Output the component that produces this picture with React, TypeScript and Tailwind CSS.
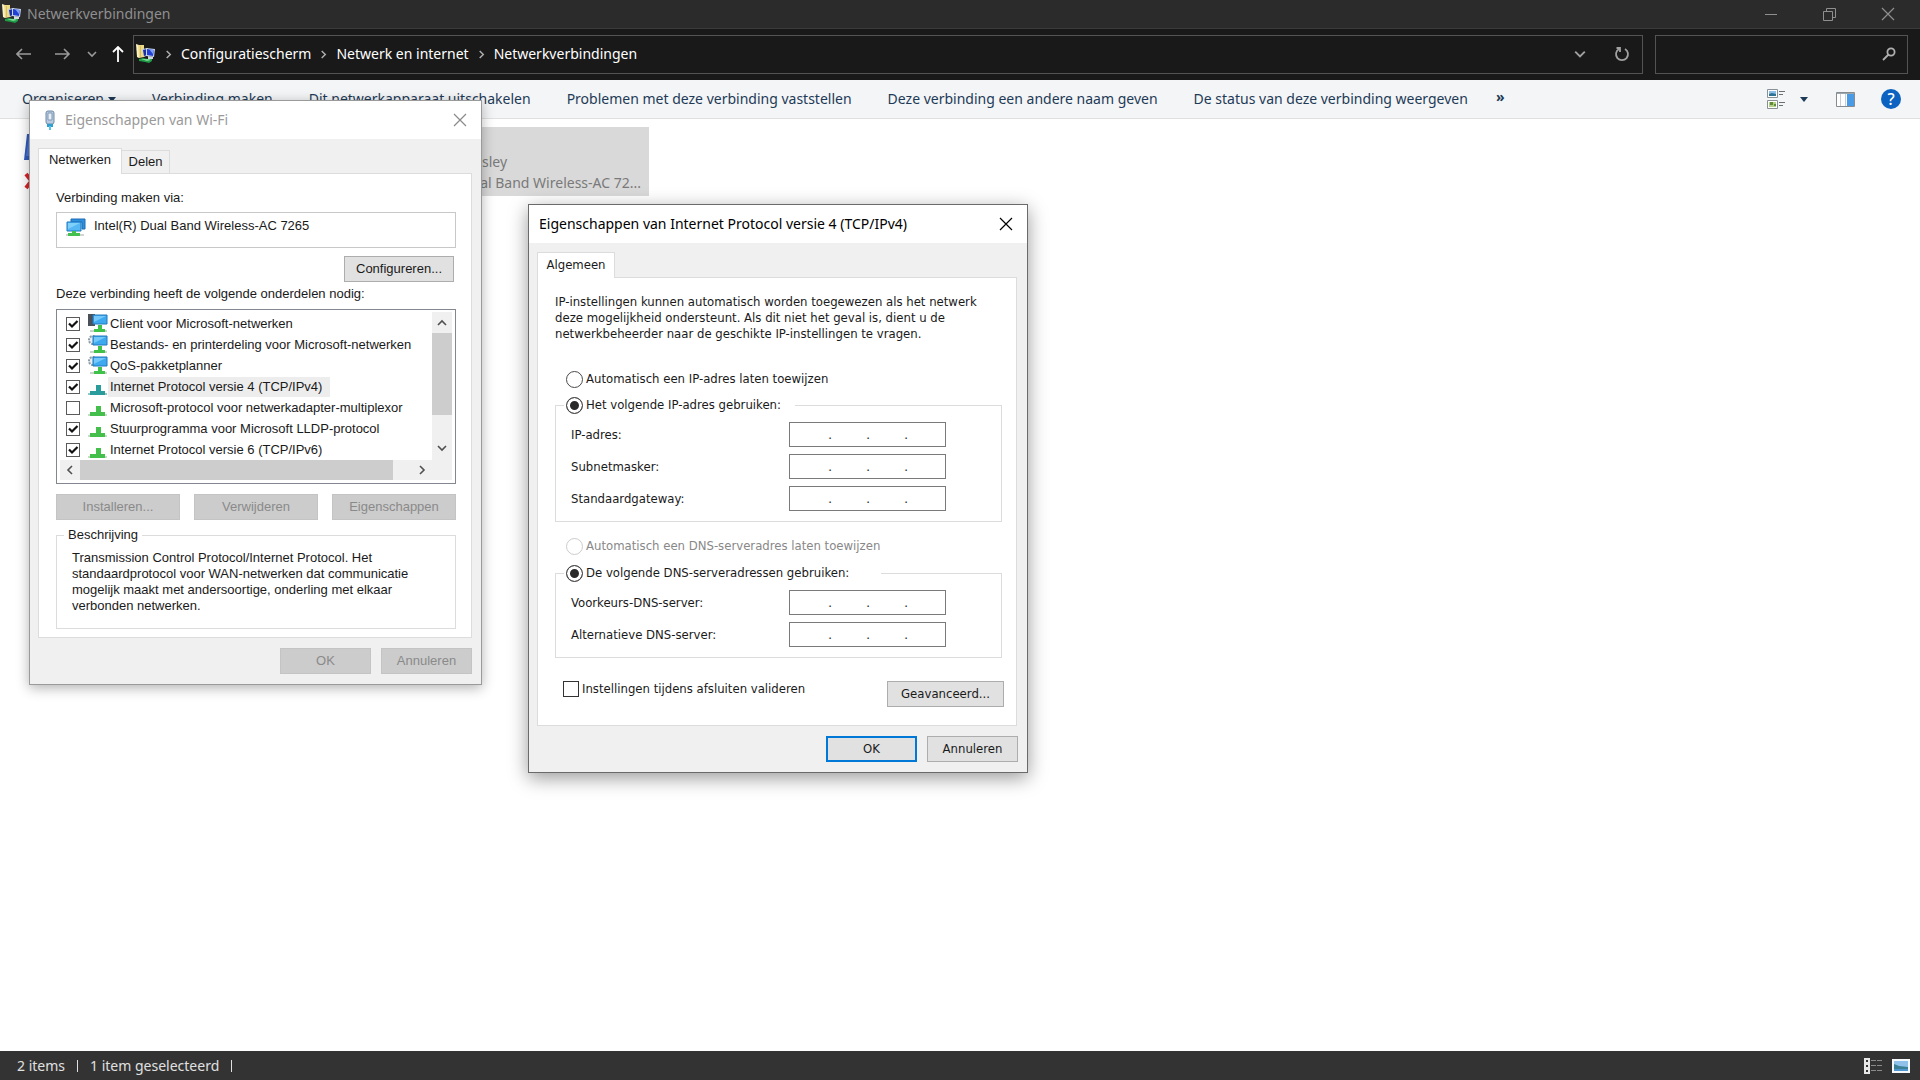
import { useId } from 'react';
import type { ReactNode } from 'react';
import clsx from 'clsx';

const commands = [
  'Verbinding maken',
  'Dit netwerkapparaat uitschakelen',
  'Problemen met deze verbinding vaststellen',
  'Deze verbinding een andere naam geven',
  'De status van deze verbinding weergeven',
];

const breadcrumbs = ['Configuratiescherm', 'Netwerk en internet', 'Netwerkverbindingen'];

const components = [
  { name: 'Client voor Microsoft-netwerken', icon: 'client', checked: true },
  { name: 'Bestands- en printerdeling voor Microsoft-netwerken', icon: 'service', checked: true },
  { name: 'QoS-pakketplanner', icon: 'service', checked: true },
  { name: 'Internet Protocol versie 4 (TCP/IPv4)', icon: 'protocol', checked: true, selected: true },
  { name: 'Microsoft-protocol voor netwerkadapter-multiplexor', icon: 'protocol', checked: false },
  { name: 'Stuurprogramma voor Microsoft LLDP-protocol', icon: 'protocol', checked: true },
  { name: 'Internet Protocol versie 6 (TCP/IPv6)', icon: 'protocol', checked: true },
];

function NetworkFolderIcon() {
  return (
    <svg width="20" height="20" viewBox="0 0 20 20" className="shrink-0">
      <path d="M0 0l3 1v13l-2-1z" fill="#fbf2c4" />
      <path d="M2 1l6 0v12l-5 1z" fill="#ecd98a" />
      <path d="M4 2h1v11H4z" fill="#d9bf5e" />
      <path d="M6 5l6-1v7l-4 2z" fill="#c3cfe6" />
      <path d="M7 6l4-1v6l-3 1z" fill="#1d2f9e" />
      <path d="M10 4l9 1-1 8-8-1z" fill="#c9d6ee" />
      <path d="M11 5l7 1-1 6-6-1z" fill="#2340d4" />
      <path d="M13 5l5 1-1 4z" fill="#7fa0f3" />
      <path d="M12 12l5 1v2h-5z" fill="#cfd6df" />
      <path d="M3 15l4-1 5 1 4 0v2l-3 2-4-1-6-1z" fill="#1f9a45" />
      <path d="M5 15h8l2 1-4 1z" fill="#7bd795" />
    </svg>
  );
}

function MonitorsIcon() {
  return (
    <svg width="20" height="19" viewBox="0 0 20 19" className="shrink-0">
      <path d="M5 1h14v10h-3V4H5z" fill="#2f8fdc" stroke="#1d6cb5" />
      <path d="M1 4h14v9H1z" fill="#55b8f5" stroke="#1d78c2" />
      <path d="M2 5h12L2 11z" fill="#7fd0fb" />
      <path d="M6 13h4v2h4v3H2v-3h4z" fill="#45c04f" />
      <path d="M0 16h2v2H0zM14 16h4v2h-4z" fill="#d3d3d3" />
    </svg>
  );
}

function ComponentIcon({ kind, selected }: { kind: string; selected?: boolean }) {
  if (kind === 'protocol') {
    return (
      <svg width="20" height="21" viewBox="0 0 20 21" className="shrink-0">
        <path d="M8 9h5v6h4v4H2v-4h6z" fill={selected ? '#2b9c9c' : '#45bf4b'} />
        <path d="M0 17h2v2H0zM17 17h2v2h-2z" fill={selected ? '#8fc6c6' : '#c3ddc4'} />
      </svg>
    );
  }
  return (
    <svg width="20" height="21" viewBox="0 0 20 21" className="shrink-0">
      {kind === 'client' ? (
        <path d="M0 1h7v12H0z" fill="#4b5158" />
      ) : (
        <circle cx="5" cy="6" r="4" fill="#e8eef3" stroke="#8c9aa5" strokeWidth="2" strokeDasharray="2 1" />
      )}
      <path d="M5 2h14v9H5z" fill="#3fa9f0" stroke="#2079bd" />
      <path d="M6 3h12L6 9z" fill="#74c8fa" />
      <path d="M10 12h4v4h3v3H6v-3h4z" fill="#3fc24a" />
      <path d="M2 17h4v2H2zM17 17h2v2h-2z" fill="#c6d3c8" />
    </svg>
  );
}

function AdapterIcon() {
  return (
    <svg width="10" height="20" viewBox="0 0 10 20" className="shrink-0">
      <rect x="1" y="1" width="8" height="13" rx="2" fill="#b9cbe0" stroke="#6f8aa8" />
      <path d="M3 3h4v7H3z" fill="#e6eef7" stroke="#8199b4" />
      <path d="M2 14h6v3H2z" fill="#2c9fd2" />
      <path d="M4 16h2v4H4z" fill="#56c3e8" />
    </svg>
  );
}

function Chevron({ dir, size = 10, className }: { dir: string; size?: number; className?: string }) {
  const paths: Record<string, string> = {
    up: 'M1 7l4-4 4 4',
    down: 'M1 3l4 4 4-4',
    left: 'M7 1L3 5l4 4',
    right: 'M3 1l4 4-4 4',
  };
  return (
    <svg width={size} height={size} viewBox="0 0 10 10" fill="none" stroke="currentColor" strokeWidth="1.6" className={clsx('shrink-0', className)}>
      <path d={paths[dir]} />
    </svg>
  );
}

function CloseGlyph() {
  return (
    <svg width="14" height="14" viewBox="0 0 14 14" fill="none" stroke="currentColor" strokeWidth="1.2">
      <path d="M1 1l12 12M13 1L1 13" />
    </svg>
  );
}

function PushButton({ children, className, disabled }: { children: ReactNode; className?: string; disabled?: boolean }) {
  return (
    <button
      type="button"
      disabled={disabled}
      className={clsx(
        'h-[26px] shrink-0 border text-center leading-4',
        disabled ? 'border-[#c4c4c4] bg-[#cccccc] text-[#8a8a8a]' : 'bg-[#e1e1e1] text-[#1a1a1a]',
        className,
      )}
    >
      {children}
    </button>
  );
}

function RadioOption({ name, label, checked, disabled }: { name: string; label: string; checked?: boolean; disabled?: boolean }) {
  return (
    <label className={clsx('flex h-[18px] items-center gap-[3px]', disabled && 'text-[#888888]')}>
      <input
        type="radio"
        name={name}
        defaultChecked={checked}
        disabled={disabled}
        className="size-[17px] shrink-0 appearance-none rounded-full border border-[#4a4a4a] bg-white checked:bg-[#2a2a2a] checked:shadow-[inset_0_0_0_3px_white] disabled:border-[#cccccc]"
      />
      {label}
    </label>
  );
}

function AddressField({ label }: { label: string }) {
  const id = useId();
  return (
    <div className="flex items-center">
      <label htmlFor={id} className="w-[218px]">
        {label}
      </label>
      <div className="flex h-[25px] w-[157px] items-center border border-[#7a7a7a] bg-white pl-1">
        {[0, 1, 2, 3].map((part) => (
          <div key={part} className="flex items-center">
            {part > 0 && <span className="w-1 text-center">.</span>}
            <input
              id={part === 0 ? id : undefined}
              aria-label={part === 0 ? undefined : `${label} ${part + 1}`}
              type="text"
              maxLength={3}
              className="h-5 w-[34px] bg-transparent text-center outline-none"
            />
          </div>
        ))}
      </div>
    </div>
  );
}

function TitleBar() {
  return (
    <div className="flex h-[29px] items-center border-b border-[#3a3a3a] bg-[#2b2b2b] pr-[2px] text-[#8f8f8f]">
      <div className="flex flex-1 items-center gap-[5px] pl-[2px]">
        <NetworkFolderIcon />
        <span>Netwerkverbindingen</span>
      </div>
      <button type="button" aria-label="Minimaliseren" className="flex w-[58px] justify-center">
        <svg width="12" height="12" viewBox="0 0 12 12" stroke="currentColor">
          <path d="M0 6.5h12" />
        </svg>
      </button>
      <button type="button" aria-label="Verkleinen" className="flex w-[58px] justify-center">
        <svg width="13" height="13" viewBox="0 0 13 13" fill="none" stroke="currentColor">
          <path d="M.5 3.5h9v9h-9zM3.5 3V.5h9v9H10" />
        </svg>
      </button>
      <button type="button" aria-label="Sluiten" className="flex w-[60px] justify-center">
        <CloseGlyph />
      </button>
    </div>
  );
}

function NavigationBar() {
  return (
    <div className="flex h-[51px] items-center bg-[#191919] pr-3 pb-px text-white">
      <button type="button" aria-label="Terug" className="ml-4 text-[#9a9a9a]">
        <svg width="16" height="14" viewBox="0 0 16 14" fill="none" stroke="currentColor" strokeWidth="1.6">
          <path d="M6 2L1 7l5 5M1 7h14" />
        </svg>
      </button>
      <button type="button" aria-label="Vooruit" className="ml-[23px] text-[#9a9a9a]">
        <svg width="16" height="14" viewBox="0 0 16 14" fill="none" stroke="currentColor" strokeWidth="1.6">
          <path d="M9 2l5 5-5 5M14 7H0" />
        </svg>
      </button>
      <button type="button" aria-label="Recente locaties" className="ml-[16px] text-[#9a9a9a]">
        <Chevron dir="down" />
      </button>
      <button type="button" aria-label="Omhoog" className="ml-[15px]">
        <svg width="12" height="16" viewBox="0 0 12 16" fill="none" stroke="currentColor" strokeWidth="1.8">
          <path d="M1 6l5-5 5 5M6 1v15" />
        </svg>
      </button>
      <nav className="ml-[9px] flex h-[39px] flex-1 items-center border border-[#535353] pl-[2px]">
        <NetworkFolderIcon />
        {breadcrumbs.map((crumb) => (
          <div key={crumb} className="flex items-center">
            <Chevron dir="right" size={9} className="mx-2 text-[#b0b0b0]" />
            <a href="#" className="whitespace-nowrap">
              {crumb}
            </a>
          </div>
        ))}
        <button type="button" aria-label="Vorige locaties" className="mr-[28px] ml-auto text-[#a0a0a0]">
          <Chevron dir="down" size={12} />
        </button>
        <button type="button" aria-label="Vernieuwen" className="mr-[12px] text-[#a0a0a0]">
          <svg width="16" height="16" viewBox="0 0 16 16" fill="none" stroke="currentColor" strokeWidth="1.8">
            <path d="M5 3a6 6 0 1 0 6 0M2.500 2H6v4" />
          </svg>
        </button>
      </nav>
      <div className="ml-3 flex h-[39px] w-[253px] items-center border border-[#535353] pr-[11px] text-[#b0b0b0]">
        <input type="search" aria-label="Zoeken" className="h-full min-w-0 flex-1 bg-transparent px-2 outline-none" />
        <svg width="14" height="14" viewBox="0 0 14 14" fill="none" stroke="currentColor" strokeWidth="1.8">
          <circle cx="9" cy="5" r="3.6" />
          <path d="M6.5 7.5L1 13" />
        </svg>
      </div>
    </div>
  );
}

function CommandBar() {
  return (
    <div className="flex h-[39px] items-center border-b border-[#e0e0e0] bg-[#f3f5f7] text-[#1e3a56]">
      <div className="flex flex-1 items-center gap-9 pl-[22px] whitespace-nowrap">
        <button type="button" className="flex items-center gap-1">
          Organiseren
          <svg width="8" height="5" viewBox="0 0 8 5" fill="currentColor">
            <path d="M0 0h8L4 5z" />
          </svg>
        </button>
        {commands.map((command) => (
          <button key={command} type="button">
            {command}
          </button>
        ))}
        <button type="button" aria-label="Meer opdrachten" className="-ml-2 pb-1 font-bold">
          »
        </button>
      </div>
      <button type="button" aria-label="Weergave wijzigen" className="flex items-center gap-[14px]">
        <svg width="19" height="20" viewBox="0 0 19 20">
          <path d="M.5.5h10v8H.5zM.5 11.500h10v8H.5z" fill="#fff" stroke="#8a8f94" />
          <path d="M2 2h7v5H2z" fill="#8dbfe8" />
          <path d="M2 5l3-1 4 1v2H2z" fill="#2f7394" />
          <path d="M2 13h7v5H2z" fill="#b4cf87" />
          <path d="M3 13h3v3H3zM7 15h2v2H7z" fill="#5f8a3c" />
          <path d="M12 2.500h6M12 5.500h4M12 13.500h6M12 16.500h4" stroke="#6b7075" />
        </svg>
        <svg width="8" height="5" viewBox="0 0 8 5" fill="currentColor">
          <path d="M0 0h8L4 5z" />
        </svg>
      </button>
      <button type="button" aria-label="Voorbeeldvenster" className="ml-7">
        <svg width="19" height="15" viewBox="0 0 19 15">
          <path d="M.5.5h18v14H.5z" fill="#fff" stroke="#868c92" />
          <path d="M1 1h17v1H1z" fill="#9fa7ae" />
          <path d="M11 2h7v12h-7z" fill="#4a9be6" />
          <path d="M4.500 2v12M9.500 2v12" stroke="#c9cdd1" />
        </svg>
      </button>
      <button
        type="button"
        aria-label="Help"
        className="mr-[19px] ml-[26px] flex size-5 items-center justify-center rounded-full bg-[#0b62c0] text-base font-medium text-white"
      >
        ?
      </button>
    </div>
  );
}

function ConnectionList() {
  return (
    <main className="flex flex-1 items-start pt-2 pl-[24px] text-[#7a7a7a]">
      <div className="flex w-[276px] flex-col gap-3 pt-[7px]">
        <svg width="26" height="26" viewBox="0 0 26 26">
          <path d="M3 0h23v26H0z" fill="#2f5bbd" />
          <path d="M5 2h19v20H2z" fill="#4a76d2" />
        </svg>
        <svg width="15" height="18" viewBox="0 0 15 18" fill="none" stroke="#d8232a" strokeWidth="4">
          <path d="M2 2l11 14M13 2L2 16" />
        </svg>
      </div>
      <div className="w-[349px] bg-[#d9d9d9] px-2 pt-[24px] pb-[3px] leading-[21px]">
        <p className="pl-[174px]">sley</p>
        <p className="text-right whitespace-nowrap">Intel(R) Dual Band Wireless-AC 72...</p>
      </div>
    </main>
  );
}

function StatusBar() {
  return (
    <footer className="flex h-[29px] items-center bg-[#333333] text-[#e0e0e0]">
      <span className="ml-[17px]">2 items</span>
      <span className="ml-3 h-3 w-px bg-[#e0e0e0]" />
      <span className="ml-3">1 item geselecteerd</span>
      <span className="ml-3 h-3 w-px bg-[#e0e0e0]" />
      <button type="button" aria-label="Details" className="ml-auto">
        <svg width="18" height="16" viewBox="0 0 18 16">
          <path d="M0 0h6v16H0z" fill="#e8e8e8" />
          <path d="M2 2h2v2H2zM2 7h2v2H2zM2 12h2v2H2z" fill="#333" />
          <path d="M7 2.500h11M7 7.500h11M7 12.500h11" stroke="#8a8a8a" strokeDasharray="5 1" />
        </svg>
      </button>
      <button type="button" aria-label="Grote pictogrammen" className="mr-[10px] ml-[10px]">
        <svg width="18" height="14" viewBox="0 0 18 14">
          <path d="M0 0h18v14H0z" fill="#f4f8fb" />
          <path d="M2 2h14v10H2z" fill="#8fc1ea" />
          <path d="M2 5l5 2 9 1v4H2z" fill="#3a7f93" />
          <path d="M2 10h14v2H2z" fill="#4f95cf" />
        </svg>
      </button>
    </footer>
  );
}

function WifiDialog() {
  return (
    <section
      aria-label="Eigenschappen van Wi-Fi"
      className="absolute top-[100px] left-[29px] w-[453px] border border-[#9a9a9a] bg-[#f0f0f0] font-['Liberation_Sans',Arial,sans-serif] text-[13px] leading-4 text-[#1a1a1a] shadow-[0_3px_12px_rgba(0,0,0,0.3)]"
    >
      <header className="flex h-[38px] items-center bg-white pr-[14px] pl-[15px] text-[#9a9a9a]">
        <AdapterIcon />
        <h2 className="ml-[10px] flex-1 font-['Noto_Sans','Segoe_UI',sans-serif] text-sm">Eigenschappen van Wi-Fi</h2>
        <button type="button" aria-label="Sluiten" className="text-[#8a8a8a]">
          <CloseGlyph />
        </button>
      </header>
      <div className="pt-[9px] pr-[9px] pb-[10px] pl-2">
        <div role="tablist" className="flex h-[25px] items-end">
          <button type="button" role="tab" aria-selected className="z-10 -mb-px h-[26px] w-[84px] border border-b-0 border-[#dcdcdc] bg-white pb-1">
            Netwerken
          </button>
          <button type="button" role="tab" aria-selected={false} className="h-[23px] w-12 border border-b-0 border-l-0 border-[#dcdcdc]">
            Delen
          </button>
        </div>
        <div className="flex flex-col border border-[#dcdcdc] bg-white px-[17px] pt-4 pr-[15px] pb-2">
          <p>Verbinding maken via:</p>
          <div className="mt-[6px] flex h-9 items-start gap-2 border border-[#c8c8c8] px-[9px] pt-[5px]">
            <MonitorsIcon />
            <span>Intel(R) Dual Band Wireless-AC 7265</span>
          </div>
          <PushButton className="mt-2 mr-[2px] w-[110px] self-end border-[#adadad]">Configureren...</PushButton>
          <p className="mt-1">Deze verbinding heeft de volgende onderdelen nodig:</p>
          <div className="mt-[7px] border border-[#828790] pb-[3px]">
            <div className="flex pr-[3px]">
              <ul className="min-w-0 flex-1 pt-[3px]">
                {components.map((item) => (
                  <li key={item.name}>
                    <label className="flex h-[21px] items-center pl-[9px] whitespace-nowrap">
                      <span className="relative mr-2 size-[14px] shrink-0">
                        <input
                          type="checkbox"
                          defaultChecked={item.checked}
                          className="peer block size-full appearance-none border border-[#5a5a5a] bg-white"
                        />
                        <svg viewBox="0 0 14 14" fill="none" stroke="#111" strokeWidth="2.200" className="pointer-events-none absolute inset-0 hidden peer-checked:block">
                          <path d="M3 6.500l3 3L11.500 4" />
                        </svg>
                      </span>
                      <ComponentIcon kind={item.icon} selected={item.selected} />
                      <span className={clsx('px-[2px] leading-5', item.selected && 'bg-[#ededed] pr-2')}>{item.name}</span>
                    </label>
                  </li>
                ))}
              </ul>
              <div className="mt-[2px] flex w-5 shrink-0 flex-col items-center bg-[#f0f0f0] text-[#505050]">
                <div className="flex h-[21px] items-center">
                  <Chevron dir="up" />
                </div>
                <div className="h-[82px] w-full bg-[#cdcdcd]" />
                <div className="mt-auto flex h-6 items-center">
                  <Chevron dir="down" />
                </div>
              </div>
            </div>
            <div className="mx-[3px] flex h-5 items-center bg-[#f0f0f0] text-[#505050]">
              <div className="flex w-5 justify-center">
                <Chevron dir="left" />
              </div>
              <div className="h-full w-[313px] bg-[#cdcdcd]" />
              <Chevron dir="right" className="ml-6" />
            </div>
          </div>
          <div className="mt-[10px] flex justify-between">
            <PushButton disabled className="w-[124px]">Installeren...</PushButton>
            <PushButton disabled className="w-[124px]">Verwijderen</PushButton>
            <PushButton disabled className="w-[124px]">Eigenschappen</PushButton>
          </div>
          <fieldset className="mt-[7px] border border-[#dcdcdc] px-[15px] pt-[7px] pb-[14px]">
            <legend className="-ml-2 px-1">Beschrijving</legend>
            <p>
              Transmission Control Protocol/Internet Protocol. Het standaardprotocol voor WAN-netwerken dat communicatie
              mogelijk maakt met andersoortige, onderling met elkaar verbonden netwerken.
            </p>
          </fieldset>
        </div>
        <div className="mt-[10px] flex justify-end gap-[10px]">
          <PushButton disabled className="w-[91px]">OK</PushButton>
          <PushButton disabled className="w-[91px]">Annuleren</PushButton>
        </div>
      </div>
    </section>
  );
}

function Ipv4Dialog() {
  return (
    <section
      aria-label="Eigenschappen van Internet Protocol versie 4 (TCP/IPv4)"
      className="absolute top-[204px] left-[528px] w-[500px] border border-[#6a6a6a] bg-[#f0f0f0] font-['DejaVu_Sans_Condensed','DejaVu_Sans',Tahoma,sans-serif] text-[13px] leading-4 text-[#1a1a1a] shadow-[0_5px_18px_rgba(0,0,0,0.4)]"
    >
      <header className="flex h-[38px] items-center bg-white pr-[14px] pl-[10px] text-black">
        <h2 className="flex-1 font-['Noto_Sans','Segoe_UI',sans-serif] text-sm whitespace-nowrap">
          Eigenschappen van Internet Protocol versie 4 (TCP/IPv4)
        </h2>
        <button type="button" aria-label="Sluiten">
          <CloseGlyph />
        </button>
      </header>
      <div className="pt-[9px] pr-[9px] pb-[10px] pl-2">
        <div role="tablist" className="flex h-[25px]">
          <button type="button" role="tab" aria-selected className="z-10 -mb-px w-[78px] border border-b-0 border-[#dcdcdc] bg-white pb-[2px]">
            Algemeen
          </button>
        </div>
        <div className="mr-px border border-[#dcdcdc] bg-white pt-4 pr-3 pb-[18px] pl-[17px]">
          <p>
            IP-instellingen kunnen automatisch worden toegewezen als het netwerk
            <br />
            deze mogelijkheid ondersteunt. Als dit niet het geval is, dient u de
            <br />
            netwerkbeheerder naar de geschikte IP-instellingen te vragen.
          </p>
          <div className="mt-7 pl-[11px]">
            <RadioOption name="ip" label="Automatisch een IP-adres laten toewijzen" />
          </div>
          <fieldset className="mt-2 mr-[2px] flex flex-col gap-[7px] border border-[#dcdcdc] px-[15px] pt-2 pb-[10px]">
            <legend className="-ml-[7px] pr-[14px] pl-[2px]">
              <RadioOption name="ip" label="Het volgende IP-adres gebruiken:" checked />
            </legend>
            <AddressField label="IP-adres:" />
            <AddressField label="Subnetmasker:" />
            <AddressField label="Standaardgateway:" />
          </fieldset>
          <div className="mt-[15px] pl-[11px]">
            <RadioOption name="dns" label="Automatisch een DNS-serveradres laten toewijzen" disabled />
          </div>
          <fieldset className="mt-[9px] mr-[2px] flex flex-col gap-[7px] border border-[#dcdcdc] px-[15px] pt-2 pb-[10px]">
            <legend className="-ml-[7px] pr-8 pl-[2px]">
              <RadioOption name="dns" label="De volgende DNS-serveradressen gebruiken:" checked />
            </legend>
            <AddressField label="Voorkeurs-DNS-server:" />
            <AddressField label="Alternatieve DNS-server:" />
          </fieldset>
          <div className="mt-[23px] flex items-start justify-between pl-2">
            <label className="flex items-center gap-[3px]">
              <input type="checkbox" className="size-4 appearance-none border border-[#333333] bg-white checked:bg-[#333333]" />
              Instellingen tijdens afsluiten valideren
            </label>
            <PushButton className="w-[117px] border-[#adadad]">Geavanceerd...</PushButton>
          </div>
        </div>
        <div className="mt-[10px] flex justify-end gap-[10px]">
          <PushButton className="w-[91px] border-2 border-[#0078d7]">OK</PushButton>
          <PushButton className="w-[91px] border-[#adadad]">Annuleren</PushButton>
        </div>
      </div>
    </section>
  );
}

export default function App() {
  return (
    <div className="relative flex min-h-screen flex-col overflow-hidden bg-white font-['Noto_Sans','Segoe_UI',sans-serif] text-sm">
      <TitleBar />
      <NavigationBar />
      <CommandBar />
      <ConnectionList />
      <StatusBar />
      <WifiDialog />
      <Ipv4Dialog />
    </div>
  );
}
